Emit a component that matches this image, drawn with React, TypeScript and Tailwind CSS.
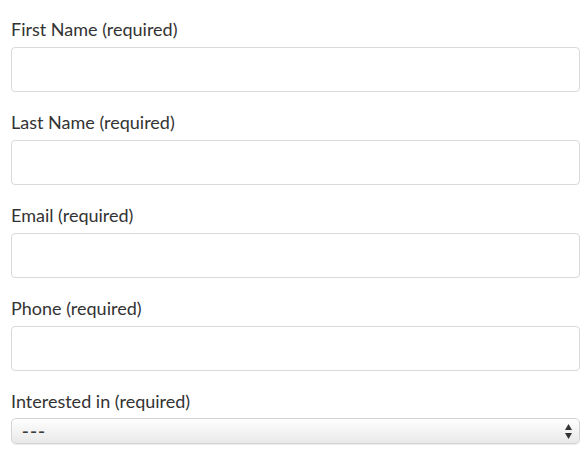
const FIELDS = ["First Name (required)", "Last Name (required)", "Email (required)", "Phone (required)"];

export default function App() {
  return (
    <div className="min-h-[460px] w-[588px] bg-white px-[11px] pt-[17px] font-['Lato',sans-serif] text-[#333]">
      {FIELDS.map((label) => (
        <div key={label} className="mb-[18px]">
          <label className="mb-[6px] block text-[18px] leading-[24px]">{label}</label>
          <input
            type="text"
            className="block h-[45px] w-[569px] rounded-[4px] border border-[#d9d9d9] bg-white px-3 outline-none"
          />
        </div>
      ))}
      <div>
        <label className="mb-[5px] block text-[18px] leading-[24px]">Interested in (required)</label>
        <div className="relative flex h-[26px] w-[569px] items-center rounded-[5px] border border-[#d4d4d4] bg-gradient-to-b from-[#fefefe] to-[#e9e9e9] pl-[10px] text-[#3a3a3a] shadow-[0_1px_1px_rgba(0,0,0,0.08)]">
          <span className="font-['Liberation_Sans',sans-serif] text-[20px] leading-none tracking-[1.5px]">---</span>
          <svg className="absolute right-[7px] top-[5px]" width="7" height="15" viewBox="0 0 7 15">
            <path d="M3.5 0 L7 6 L0 6 Z" fill="#333" />
            <path d="M0 9 L7 9 L3.5 15 Z" fill="#333" />
          </svg>
        </div>
      </div>
    </div>
  );
}
